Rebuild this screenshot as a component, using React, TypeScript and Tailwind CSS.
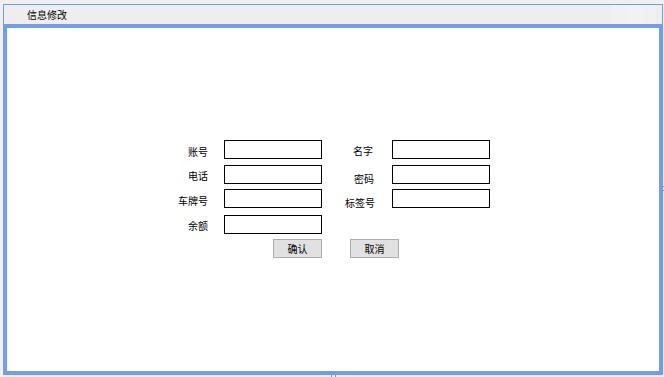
import React from 'react';

const font = { fontFamily: '"Noto Sans CJK SC", "Noto Sans", sans-serif' };

function Field({ label, labelW, labelPad, gap }: { label: string; labelW: string; labelPad: string; gap: string }) {
  return (
    <div className="flex items-start h-[19px]">
      <div className={`${labelW} ${labelPad} text-right leading-[19px] text-[10px] text-black shrink-0`}>{label}</div>
      <input className={`${gap} w-[98px] h-[19px] border border-black bg-white outline-none shrink-0`} />
    </div>
  );
}

export default function App() {
  return (
    <div className="relative w-[664px] h-[377px] bg-[#f0f0f0] pt-[4px] pl-[3px] overflow-hidden" style={font}>
      <div className="w-[660px]">
        {/* tab header */}
        <div className="h-[20px] border-t border-x border-[#6f9ef0] bg-[#eeeeee] flex items-center pl-[23px] text-[10px] text-black">
          <span>信息修改</span>
          <div className="ml-auto mr-[6px] flex h-full">
            <div className="w-[15px] h-full bg-[#f1f1f1]" />
            <div className="w-[15px] h-full bg-[#f2f2f2]" />
            <div className="w-[15px] h-full bg-[#f1f1f1]" />
          </div>
        </div>
        {/* content */}
        <div className="h-[351px] border-4 border-[#6f9ef0] bg-white pt-[112px] pl-[143px]">
          <div className="flex">
            <div className="flex flex-col">
              <Field label="账号" labelW="w-[58px]" labelPad="pt-[2px]" gap="ml-[16px]" />
              <div className="mt-[6px]">
                <Field label="电话" labelW="w-[58px]" labelPad="pt-[1px]" gap="ml-[16px]" />
              </div>
              <div className="mt-[5px]">
                <Field label="车牌号" labelW="w-[58px]" labelPad="pt-[2px]" gap="ml-[16px]" />
              </div>
              <div className="mt-[7px]">
                <Field label="余额" labelW="w-[58px]" labelPad="pt-[1px]" gap="ml-[16px]" />
              </div>
            </div>
            <div className="flex flex-col">
              <Field label="名字" labelW="w-[51px]" labelPad="pt-[1px]" gap="ml-[19px]" />
              <div className="mt-[6px]">
                <Field label="密码" labelW="w-[52px]" labelPad="pt-[4px]" gap="ml-[18px]" />
              </div>
              <div className="mt-[5px]">
                <Field label="标签号" labelW="w-[53px]" labelPad="pt-[4px]" gap="ml-[17px]" />
              </div>
            </div>
          </div>
          <div className="flex mt-[5px] pl-[123px]">
            <button className="w-[49px] h-[19px] bg-[#e1e1e1] border border-[#adadad] text-[10px] text-black leading-none">确认</button>
            <button className="ml-[28px] w-[49px] h-[19px] bg-[#e1e1e1] border border-[#adadad] text-[10px] text-black leading-none">取消</button>
          </div>
        </div>
      </div>
      {/* resize grips */}
      <div className="absolute left-[331px] top-[374px] w-[5px] h-[3px] border-x border-[#6f9ef0]" />
      <div className="absolute left-[661px] top-[186px] w-[3px] h-[5px] border-y border-[#6f9ef0]" />
    </div>
  );
}
